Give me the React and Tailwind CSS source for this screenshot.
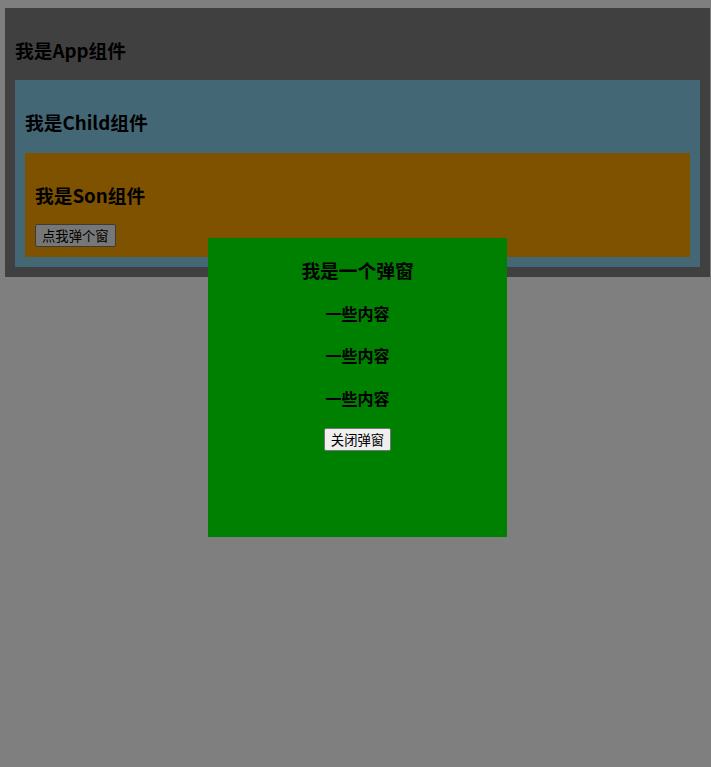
export default function App() {
  const font = "font-['Noto_Sans_CJK_SC','Noto_Sans',sans-serif]";
  return (
    <div className={`relative min-h-screen bg-white text-black ${font}`}>
      <div className="pt-[8px] pl-[5px]">
        <div className="w-[705px] bg-[#808080] p-[10px]">
          <h3 className="my-[18.72px] text-[18.72px] font-bold leading-[25px]">我是App组件</h3>
          <div className="bg-[#87ceeb] p-[10px]">
            <h3 className="my-[18.72px] text-[18.72px] font-bold leading-[25px]">我是Child组件</h3>
            <div className="bg-[#ffa500] p-[10px]">
              <h3 className="my-[18.72px] text-[18.72px] font-bold leading-[25px]">我是Son组件</h3>
              <button className="-mt-[1px] block rounded-[2px] border border-[#767676] bg-[#efefef] px-[6px] py-[1px] text-[13.33px] leading-[19px]">
                点我弹个窗
              </button>
            </div>
          </div>
        </div>
      </div>

      <div className="fixed inset-0 bg-black/50" />

      <div className="fixed left-[208px] top-[238px] h-[299px] w-[299px] bg-[#008000] text-center">
        <h3 className="my-[18.72px] text-[18.72px] font-bold leading-[25px]">我是一个弹窗</h3>
        <h4 className="my-[21.28px] text-[16px] font-bold leading-[21px]">一些内容</h4>
        <h4 className="my-[21.28px] text-[16px] font-bold leading-[21px]">一些内容</h4>
        <h4 className="my-[21.28px] text-[16px] font-bold leading-[21px]">一些内容</h4>
        <button className="mx-auto -mt-[1.5px] block rounded-[2px] border border-[#767676] bg-[#efefef] px-[6px] py-[1px] text-[13.33px] leading-[19px]">
          关闭弹窗
        </button>
      </div>
    </div>
  );
}
